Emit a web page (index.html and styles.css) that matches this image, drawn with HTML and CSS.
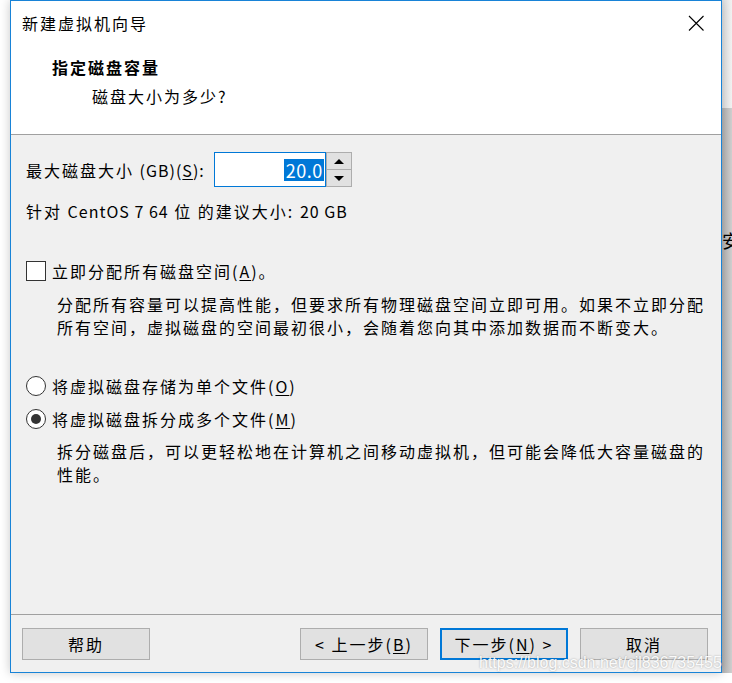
FILE: index.html
```
<!DOCTYPE html>
<html lang="zh-CN">
<head>
<meta charset="utf-8">
<title>新建虚拟机向导</title>
<link rel="stylesheet" href="styles.css">
</head>
<body>
<div class="screen">
  <div class="dialog">
    <header class="header">
      <div class="titlebar">
        <span class="title">新建虚拟机向导</span>
        <svg class="close" width="16" height="16" viewBox="0 0 16 16" aria-label="关闭"><path d="M1 1L15.5 15.5M15.5 1L1 15.5" stroke="#000" stroke-width="1.1" fill="none"/></svg>
      </div>
      <div class="heading">指定磁盘容量</div>
      <div class="subheading">磁盘大小为多少?</div>
    </header>
    <main class="body">
      <div class="spin-row">
        <span class="label">最大磁盘大小 <span class="lat">(GB)(<u>S</u>):</span></span>
        <div class="spin">
          <div class="spin-input"><span class="sel">20.0</span></div>
          <div class="spin-btns">
            <div class="spin-btn"><span class="arrow-up"></span></div>
            <div class="spin-btn bottom"><span class="arrow-down"></span></div>
          </div>
        </div>
      </div>
      <div class="recommend">针对 <span class="lat">CentOS 7 64</span> 位 的建议大小: <span class="lat">20 GB</span></div>
      <div class="option check-row"><span class="checkbox"></span><span>立即分配所有磁盘空间(<u>A</u>)。</span></div>
      <p class="desc">分配所有容量可以提高性能，但要求所有物理磁盘空间立即可用。如果不立即分配所有空间，虚拟磁盘的空间最初很小，会随着您向其中添加数据而不断变大。</p>
      <div class="option radio-row first"><span class="radio"></span><span>将虚拟磁盘存储为单个文件(<u>O</u>)</span></div>
      <div class="option radio-row"><span class="radio checked"></span><span>将虚拟磁盘拆分成多个文件(<u>M</u>)</span></div>
      <p class="desc desc2">拆分磁盘后，可以更轻松地在计算机之间移动虚拟机，但可能会降低大容量磁盘的性能。</p>
    </main>
    <footer class="footer">
      <button class="btn">帮助</button>
      <div class="nav">
        <button class="btn">&lt; 上一步(<u>B</u>)</button>
        <button class="btn default">下一步(<u>N</u>) &gt;</button>
        <button class="btn">取消</button>
      </div>
    </footer>
    <div class="watermark">https://blog.csdn.net/cjl836735455</div>
  </div>
  <div class="side">
    <div class="side-top"></div>
    <div class="side-bottom"><span class="side-char">安</span></div>
  </div>
</div>
</body>
</html>
```
FILE: styles.css
```
html, body {
  margin: 0;
  padding: 0;
}
body {
  width: 732px;
  height: 683px;
  overflow: hidden;
  background: #ffffff;
  font-family: "Noto Sans CJK SC", "Noto Sans", sans-serif;
  font-size: 16px;
  letter-spacing: 2px;
  color: #000;
}
.screen {
  display: flex;
  align-items: flex-start;
  width: 732px;
  height: 683px;
}
.dialog {
  position: relative;
  z-index: 1;
  box-sizing: border-box;
  width: 712px;
  height: 673px;
  margin-left: 10px;
  border: 1px solid #1883d7;
  background: #f0f0f0;
  box-shadow: 0 0 10px rgba(0, 0, 0, 0.22);
  display: flex;
  flex-direction: column;
}
.header {
  background: #ffffff;
  height: 133px;
  border-bottom: 1px solid #a0a0a0;
}
.titlebar {
  height: 44px;
  display: flex;
  align-items: center;
  justify-content: space-between;
  padding: 0 17px 0 11px;
}
.title {
  line-height: 24px;
}
.close {
  display: block;
}
.heading {
  margin-top: 10px;
  padding-left: 41px;
  line-height: 24px;
  font-weight: 700;
}
.subheading {
  margin-top: 5px;
  padding-left: 81px;
  line-height: 24px;
}
.body {
  flex: 1;
  padding: 17px 9px 0 15px;
}
.lat {
  letter-spacing: 1px;
}
.spin-row {
  display: flex;
  align-items: center;
  height: 35px;
}
.spin {
  display: flex;
  margin-left: 9px;
}
.spin-input {
  box-sizing: border-box;
  width: 112px;
  height: 35px;
  border: 1px solid #0078d7;
  background: #fff;
  display: flex;
  align-items: center;
  justify-content: flex-end;
  padding-right: 1px;
}
.sel {
  background: #0078d7;
  color: #fff;
  font-size: 18px;
  letter-spacing: 0.5px;
  line-height: 22px;
  padding: 0 1px 0 2px;
}
.spin-btns {
  width: 26px;
  height: 35px;
  display: flex;
  flex-direction: column;
}
.spin-btn {
  box-sizing: border-box;
  height: 18px;
  border: 1px solid #adadad;
  background: #e1e1e1;
  display: flex;
  align-items: center;
  justify-content: center;
}
.spin-btn.bottom {
  height: 17px;
  border-top: 0;
}
.arrow-up {
  width: 0;
  height: 0;
  border-left: 5px solid transparent;
  border-right: 5px solid transparent;
  border-bottom: 5px solid #000;
}
.arrow-down {
  width: 0;
  height: 0;
  border-left: 5px solid transparent;
  border-right: 5px solid transparent;
  border-top: 5px solid #000;
}
.recommend {
  margin-top: 12px;
  line-height: 24px;
}
.option {
  display: flex;
  align-items: center;
  gap: 6px;
  height: 24px;
}
.check-row {
  margin-top: 36px;
}
.checkbox {
  box-sizing: border-box;
  width: 20px;
  height: 20px;
  border: 1px solid #333;
  background: #fff;
}
.radio {
  box-sizing: border-box;
  width: 20px;
  height: 20px;
  border: 1px solid #333;
  border-radius: 50%;
  background: #fff;
  display: flex;
  align-items: center;
  justify-content: center;
}
.radio.checked::after {
  content: "";
  width: 10px;
  height: 10px;
  border-radius: 50%;
  background: #333;
}
.desc {
  margin: 10px 0 0;
  padding-left: 31px;
  line-height: 23px;
}
.radio-row.first {
  margin-top: 35px;
}
.radio-row + .radio-row {
  margin-top: 9px;
}
.desc2 {
  margin-top: 9px;
}
u {
  text-decoration: underline;
  text-underline-offset: 2px;
}
.footer {
  height: 58px;
  box-sizing: border-box;
  border-top: 1px solid #a0a0a0;
  padding: 13px 13px 0 11px;
  display: flex;
  align-items: flex-start;
  justify-content: space-between;
}
.nav {
  display: flex;
  gap: 12px;
}
.btn {
  box-sizing: border-box;
  width: 128px;
  height: 32px;
  margin: 0;
  padding: 0;
  border: 1px solid #adadad;
  background: #e1e1e1;
  font: inherit;
  letter-spacing: inherit;
  color: #000;
  line-height: 24px;
}
.btn.default {
  border: 2px solid #0078d7;
}
.watermark {
  position: absolute;
  left: 468px;
  top: 653px;
  font-family: "Liberation Sans", Arial, sans-serif;
  font-size: 16px;
  letter-spacing: 0;
  line-height: 18px;
  white-space: nowrap;
  color: rgba(255, 255, 255, 0.95);
  text-shadow: 0 0 2px rgba(0, 0, 0, 0.35);
}
.side {
  width: 10px;
  height: 673px;
  overflow: hidden;
  display: flex;
  flex-direction: column;
}
.side-top {
  height: 108px;
  background: linear-gradient(to right, #e2e2e2, #f2f2f2);
}
.side-bottom {
  flex: 1;
  background: linear-gradient(to right, #b4b4b4, #cfcfcf);
}
.side-char {
  display: block;
  margin-top: 120px;
  font-size: 18px;
  line-height: 24px;
  letter-spacing: 0;
  white-space: nowrap;
}
```
